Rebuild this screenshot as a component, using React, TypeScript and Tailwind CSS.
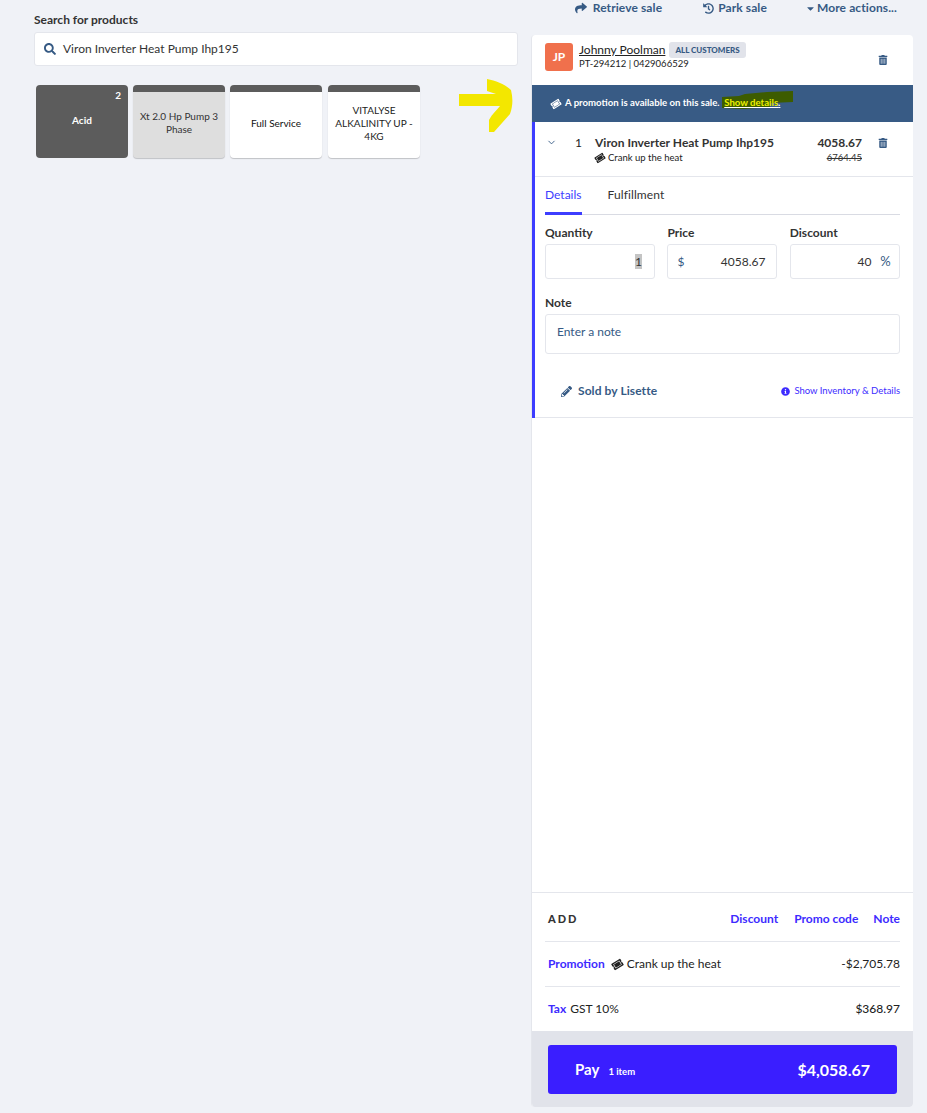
import React from "react";
import { FaShare, FaHistory, FaCaretDown, FaSearch, FaTrashAlt, FaTicketAlt, FaPencilAlt, FaInfoCircle } from "react-icons/fa";
import { ChevronDown } from "lucide-react";

const Ticket = ({ className }: { className: string }) => <FaTicketAlt className={`-rotate-[32deg] ${className}`} />;

function Tile({ label, className, textClass }: { label: React.ReactNode; className: string; textClass: string }) {
  return (
    <div className={`w-[92px] h-[73px] rounded-[4px] overflow-hidden flex flex-col shadow-[0_1px_1px_rgba(0,0,0,0.2)] ${className}`}>
      <div className="h-[7px] bg-[#5c5c5c] shrink-0" />
      <div className={`flex-1 flex items-center justify-center text-center text-[10px] leading-[13px] px-[4px] pb-[4px] ${textClass}`}>{label}</div>
    </div>
  );
}

function Field({ label, children, className }: { label: string; children: React.ReactNode; className?: string }) {
  return (
    <div className={className}>
      <div className="text-[12px] leading-4 font-bold text-[#333] mb-[3px]">{label}</div>
      {children}
    </div>
  );
}

export default function App() {
  return (
    <div className="relative w-[927px] h-[1113px] overflow-hidden bg-[#f0f2f7] flex font-['Lato',sans-serif] text-[#222]">
      <div className="w-[484px] ml-[34px] pt-[13px] shrink-0">
        <div className="text-[12px] leading-[14px] font-bold text-[#333] mb-[5px]">Search for products</div>
        <div className="h-[34px] bg-white border border-[#e4e6ec] rounded-[3px] flex items-center pl-[9px] text-[12px] text-[#333]">
          <FaSearch className="text-[#365a84] text-[12px] mr-[7px]" />
          Viron Inverter Heat Pump Ihp195
        </div>
        <div className="flex gap-[5px] ml-[2px] mt-[19px]">
          <div className="relative w-[92px] h-[73px] rounded-[4px] bg-[#5c5c5c] flex items-center justify-center pb-[2px] text-[10px] font-bold text-white">
            Acid
            <span className="absolute top-[3px] right-[7px] text-[10px] font-bold">2</span>
          </div>
          <Tile label="Xt 2.0 Hp Pump 3 Phase" className="bg-[#dedede]" textClass="text-[#333]" />
          <Tile label="Full Service" className="bg-white" textClass="text-[#111]" />
          <Tile label={<>VITALYSE ALKALINITY UP - 4KG</>} className="bg-white ml-[1px]" textClass="text-[#222]" />
        </div>
      </div>

      <div className="w-[382px] ml-[13px] shrink-0 flex flex-col">
        <div className="h-[35px] flex justify-end items-start pt-[1px] pr-[16px] text-[12px] leading-[14px] tracking-[0.1px] font-bold text-[#365a84]">
          <span className="flex items-center mr-[41px]"><FaShare className="text-[12px] mr-[6px]" />Retrieve sale</span>
          <span className="flex items-center mr-[38px]"><FaHistory className="text-[11px] mr-[4px] mt-[1px]" />Park sale</span>
          <span className="flex items-center"><FaCaretDown className="text-[11px] mr-[1px]" />More actions...</span>
        </div>

        <div className="h-[1072px] flex flex-col bg-white rounded-[4px] overflow-hidden border-l border-[#e4e6ec]">
          <div className="h-[50px] flex items-center pl-[13px] pr-[25px] shrink-0 relative">
            <div className="w-[28px] h-[28px] rounded-[3px] bg-[#f0704c] text-white text-[12px] font-bold flex items-center justify-center mr-[6px] -mt-[7px]">JP</div>
            <div className="flex-1 -mt-[7px]">
              <div className="flex items-center h-[15px]">
                <span className="text-[12px] leading-[15px] underline text-[#222]">Johnny Poolman</span>
                <span className="ml-[4px] h-[16px] px-[6px] rounded-[3px] bg-[#e1e3ea] text-[#365a84] text-[8px] font-black flex items-center">ALL CUSTOMERS</span>
              </div>
              <div className="text-[9.5px] leading-[14px] text-[#222]">PT-294212 | 0429066529</div>
            </div>
            <FaTrashAlt className="text-[#365a84] text-[10px]" />
          </div>

          <div className="h-[37px] shrink-0 bg-[#385b85] flex items-center pl-[19px] text-[9.6px] font-bold text-white">
            <Ticket className="text-[10px] mr-[4px]" />
            A promotion is available on this sale.&nbsp;&nbsp;
            <span className="relative underline">
              <svg className="absolute left-[-3px] top-[-5px]" width="74" height="21" viewBox="0 0 74 21">
                <path d="M1 6 L18 5 L24 3 L46 1 L72 0 L72 11 L50 12 L49 16 L22 18 L1 17 Z" fill="#3d5c00" />
              </svg>
              <span className="relative text-[#ecf000]">Show details</span>
              <span className="relative">.</span>
            </span>
          </div>

          <div className="border-l-[3px] border-[#3d3dff] shrink-0">
            <div className="h-[55px] border-b border-[#e4e6ec] flex items-start pt-[13px] pr-[25px]">
              <ChevronDown className="w-[11px] h-[11px] text-[#365a84] ml-[11px] mt-[2px]" />
              <span className="ml-[18px] w-[20px] text-[12px] leading-4">1</span>
              <div className="flex-1">
                <div className="text-[12px] leading-4 font-bold tracking-[0.03px] text-[#333]">Viron Inverter Heat Pump Ihp195</div>
                <div className="flex items-center text-[9.5px] leading-[13px] text-[#222]"><Ticket className="text-[10px] mr-[3px]" />Crank up the heat</div>
              </div>
              <div className="text-right mr-[16px]">
                <div className="text-[12px] leading-4 font-bold text-[#333]">4058.67</div>
                <div className="text-[9.5px] leading-[13px] line-through text-[#333]">6764.45</div>
              </div>
              <FaTrashAlt className="text-[#365a84] text-[10px] mt-[3px]" />
            </div>

            <div className="h-[241px] border-b border-[#e4e6ec] pr-[13px] pl-[10px] flex flex-col">
              <div className="h-[38px] shrink-0 flex border-b border-[#d9dbe3] text-[12px]">
                <div className="h-[38px] border-b-[3px] border-[#3d3dff] text-[#3d3dff] pt-[10px] leading-4 mr-[26px]">Details</div>
                <div className="pt-[10px] leading-4 text-[#333] tracking-[0.1px]">Fulfillment</div>
              </div>
              <div className="flex gap-[12.4px] mt-[10px]">
                <Field label="Quantity" className="w-[110px]">
                  <div className="h-[35px] border border-[#e4e6ec] rounded-[3px] flex items-center justify-end pr-[12px] text-[12px] text-[#333]">
                    <span className="bg-[#c4c4c4] leading-[15px]">1</span>
                  </div>
                </Field>
                <Field label="Price" className="w-[110px]">
                  <div className="h-[35px] border border-[#e4e6ec] rounded-[3px] flex items-center justify-between pl-[9px] pr-[11px] text-[12px] text-[#333]">
                    <span className="text-[#365a84]">$</span>4058.67
                  </div>
                </Field>
                <Field label="Discount" className="w-[110px]">
                  <div className="h-[35px] border border-[#e4e6ec] rounded-[3px] flex items-center justify-end pr-[8px] text-[12px] text-[#333]">
                    40<span className="text-[#365a84] ml-[9px] text-[13px]">%</span>
                  </div>
                </Field>
              </div>
              <div className="text-[12px] leading-4 font-bold text-[#333] mt-[16px] mb-[3px]">Note</div>
              <div className="h-[40px] shrink-0 border border-[#e4e6ec] rounded-[3px] flex items-center pl-[11px] pb-[5px] text-[12px] text-[#365a84]">Enter a note</div>
              <div className="flex items-center justify-between mt-[28px]">
                <span className="flex items-center ml-[16px] text-[12px] tracking-[0.08px] font-bold text-[#365a84]"><FaPencilAlt className="text-[11px] mr-[6px]" />Sold by Lisette</span>
                <span className="flex items-center text-[9.5px] text-[#3d2bff]"><FaInfoCircle className="text-[9px] mr-[4px]" />Show Inventory &amp; Details</span>
              </div>
            </div>
          </div>

          <div className="flex-1" />

          <div className="border-t border-[#e4e6ec] shrink-0 px-[13px]">
            <div className="h-[49px] border-b border-[#e4e6ec] flex items-center justify-between pt-[4px] text-[12px] font-bold text-[#3d2bff]">
              <span className="ml-[3px] text-[11px] font-black tracking-[2px] text-[#333]">ADD</span>
              <span className="flex gap-[16px]"><span>Discount</span><span>Promo code</span><span className="-ml-[1px]">Note</span></span>
            </div>
            <div className="h-[45px] border-b border-[#e4e6ec] flex items-center justify-between text-[12px] text-[#222]">
              <span className="ml-[3px] flex items-center"><span className="font-bold text-[#3d2bff] mr-[7px]">Promotion</span><Ticket className="text-[11px] mr-[4px]" />Crank up the heat</span>
              <span>-$2,705.78</span>
            </div>
            <div className="h-[44px] flex items-center justify-between text-[12px] text-[#222]">
              <span className="ml-[3px]"><span className="font-bold text-[#3d2bff] mr-[4px]">Tax</span>GST 10%</span>
              <span className="font-medium">$368.97</span>
            </div>
          </div>

          <div className="h-[76px] shrink-0 bg-[#e1e3ea] px-[16px] pt-[14px]">
            <div className="h-[49px] w-[349px] rounded-[3px] bg-[#3a1eff] text-white flex items-center justify-between pl-[27px] pr-[27px]">
              <span className="flex items-baseline font-bold text-[15px]">Pay<span className="text-[9.5px] ml-[9px]">1 item</span></span>
              <span className="font-bold text-[16px]">$4,058.67</span>
            </div>
          </div>
        </div>
      </div>

      <svg className="absolute left-[458px] top-[78px]" width="56" height="56" viewBox="0 0 56 56">
        <path d="M1 16 H38 L29 13 V1 C38 3 47 6 53 12 C55 20 55 28 52 36 L36 54 H31 V42 C34 36 39 32 42 28 H1 Z" fill="#f3e700" />
      </svg>
    </div>
  );
}
